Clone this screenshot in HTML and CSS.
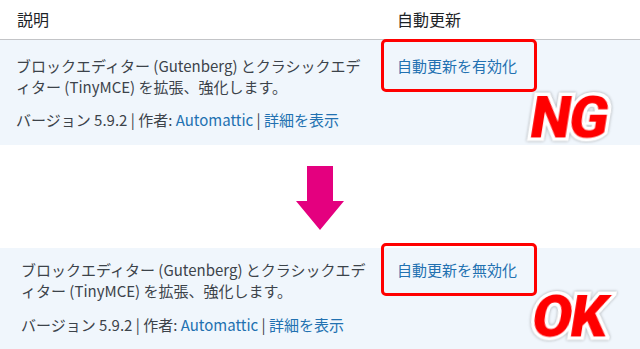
FILE: index.html
```html
<!DOCTYPE html>
<html lang="ja">
<head>
<meta charset="utf-8">
<link rel="stylesheet" href="styles.css">
</head>
<body>
<div class="page">
  <div class="head-row">
    <div class="col-desc">説明</div>
    <div class="col-auto">自動更新</div>
  </div>

  <div class="row row-ng">
    <div class="col-desc">
      <p class="desc">ブロックエディター (Gutenberg) とクラシックエデ<br>ィター (TinyMCE) を拡張、強化します。</p>
      <p class="meta">バージョン 5.9.2 | 作者: <a href="#">Automattic</a> | <a href="#">詳細を表示</a></p>
    </div>
    <div class="col-auto">
      <span class="highlight"><a href="#">自動更新を有効化</a></span>
    </div>
    <span class="stamp stamp-ng">NG</span>
  </div>

  <div class="gap">
    <svg class="arrow" width="48" height="64" viewBox="0 0 48 64" aria-hidden="true">
      <polygon points="11,0 37,0 37,35 48,35 24,64 0,35 11,35" fill="#e4007f"/>
    </svg>
  </div>

  <div class="row row-ok">
    <div class="col-desc">
      <p class="desc">ブロックエディター (Gutenberg) とクラシックエデ<br>ィター (TinyMCE) を拡張、強化します。</p>
      <p class="meta">バージョン 5.9.2 | 作者: <a href="#">Automattic</a> | <a href="#">詳細を表示</a></p>
    </div>
    <div class="col-auto">
      <span class="highlight"><a href="#">自動更新を無効化</a></span>
    </div>
    <span class="stamp stamp-ok">OK</span>
  </div>
</div>
</body>
</html>
```

FILE: styles.css
```css
html, body {
  margin: 0;
  padding: 0;
  background: #ffffff;
}

body {
  font-family: "Noto Sans CJK JP", "Noto Sans", sans-serif;
  color: #3c434a;
  font-size: 15px;
  line-height: 21px;
  overflow: hidden;
}

a {
  color: #2271b1;
  text-decoration: none;
}

p {
  margin: 0;
}

.page {
  width: 640px;
}

.head-row {
  display: flex;
  height: 39px;
  align-items: center;
  border-bottom: 1px solid #c3c4c7;
  padding-left: 17px;
  font-size: 16px;
  color: #1d2327;
  box-sizing: content-box;
}

.head-row .col-desc {
  width: 380px;
}

.row {
  position: relative;
  display: flex;
  align-items: flex-start;
  background: #f0f6fc;
}

.row .col-desc {
  width: 365px;
}

.row .col-auto {
  width: 156px;
}

.row-ng {
  height: 105px;
  padding-left: 16px;
}

.row-ng .col-desc {
  padding-top: 15px;
}

.row-ng .highlight {
  margin-top: -1px;
}

.row-ok {
  height: 101px;
  padding-left: 21px;
}

.row-ok .col-desc {
  width: 360px;
  padding-top: 11px;
}

.row-ok .highlight {
  margin-top: -5px;
}

.meta {
  margin-top: 12px;
}

.row-ok .meta {
  margin-top: 13px;
}

.highlight {
  display: block;
  box-sizing: border-box;
  width: 156px;
  height: 53px;
  border: 3px solid #ff0000;
  border-radius: 5px;
  padding: 13px 0 0 13px;
  white-space: nowrap;
}

.gap {
  height: 103px;
  display: flex;
  justify-content: center;
  align-items: flex-start;
}

.arrow {
  display: block;
  margin-top: 21px;
}

.stamp {
  position: absolute;
  font-family: Roboto, "Liberation Sans", sans-serif;
  font-weight: 900;
  font-size: 58px;
  line-height: 46px;
  letter-spacing: -2px;
  color: #ff0000;
  -webkit-text-stroke: 7px #ffffff;
  paint-order: stroke fill;
  filter: drop-shadow(0 0 1.5px rgba(0, 0, 0, 0.35));
  transform: skewX(-9deg);
}

.stamp-ng {
  left: 531px;
  top: 54px;
}

.stamp-ok {
  left: 533px;
  top: 45px;
}
```
